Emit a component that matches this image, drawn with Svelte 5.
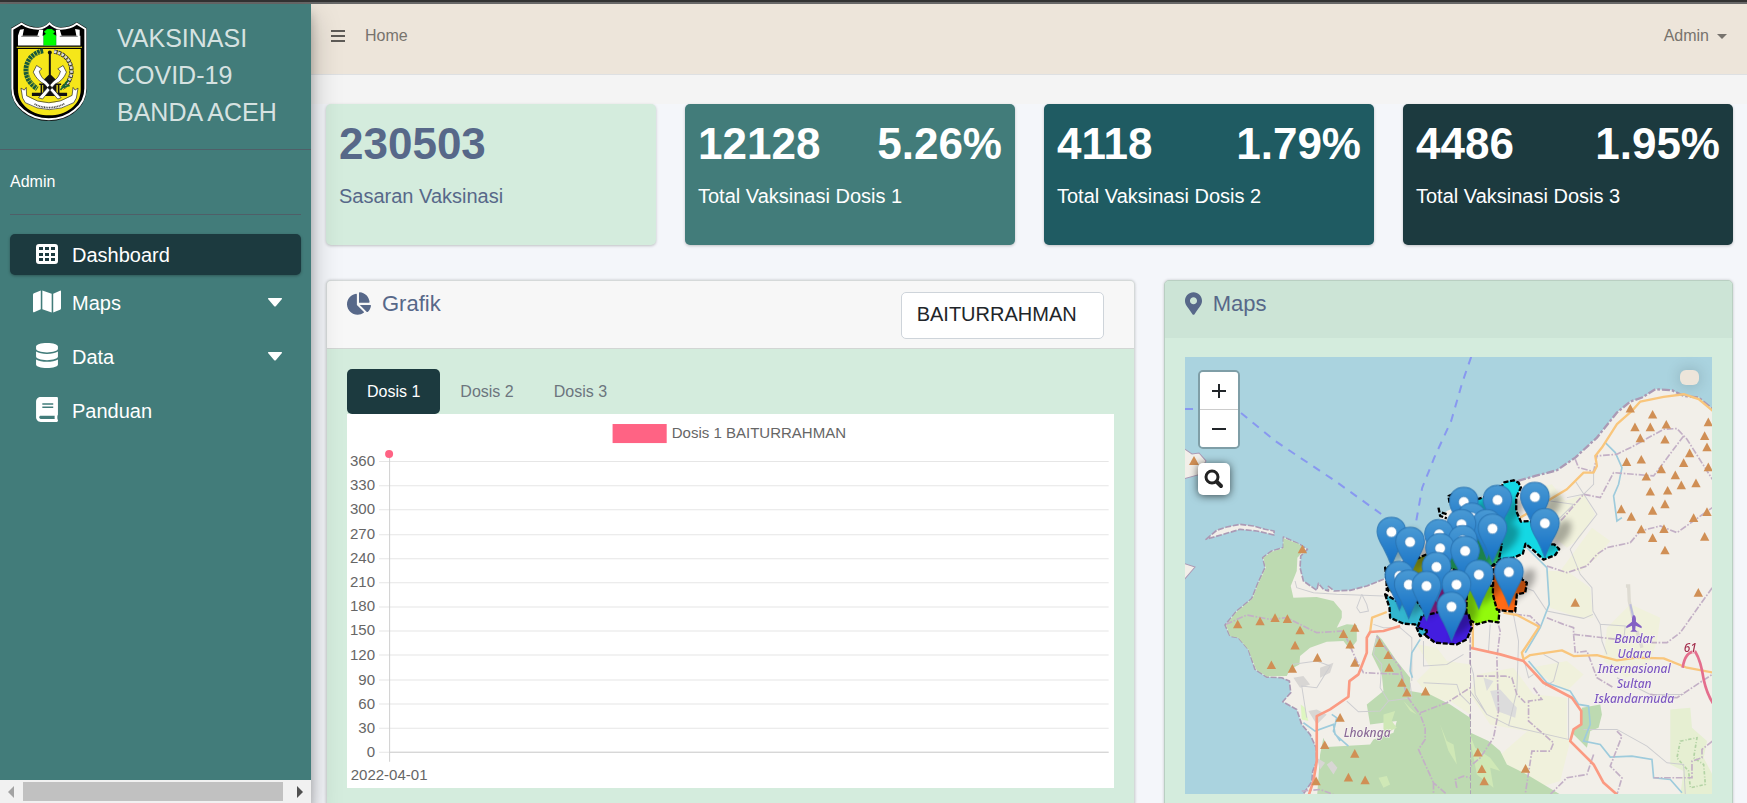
<script>
  const menu = [
    { label: 'Dashboard', icon: 'table', active: true },
    { label: 'Maps', icon: 'map', more: true },
    { label: 'Data', icon: 'database', more: true },
    { label: 'Panduan', icon: 'book' }
  ];

  const stats = [
    { value: '230503', label: 'Sasaran Vaksinasi', tone: 'mint' },
    { value: '12128', percent: '5.26%', label: 'Total Vaksinasi Dosis 1', tone: 'teal' },
    { value: '4118', percent: '1.79%', label: 'Total Vaksinasi Dosis 2', tone: 'deep' },
    { value: '4486', percent: '1.95%', label: 'Total Vaksinasi Dosis 3', tone: 'night' }
  ];

  const tabs = ['Dosis 1', 'Dosis 2', 'Dosis 3'];
  let activeTab = $state('Dosis 1');

  const ticks = [360, 330, 300, 270, 240, 210, 180, 150, 120, 90, 60, 30, 0];
  const tickY = (v) => Math.round(337 - (v / 360) * 290);

  // Summits, one list for each map sheet
  const westPeaks = [
    [397, 145], [203, 370], [270, 361], [315, 351], [352, 354], [390, 388], [375, 433], [304, 492],
    [367, 503], [442, 470], [520, 399], [554, 380], [540, 430], [554, 485], [628, 426], [654, 462],
    [657, 500], [695, 545], [710, 574], [766, 571], [510, 650], [464, 732], [554, 758], [535, 829],
    [585, 837], [438, 840]
  ];
  const eastPeaks = [
    [540, 203], [607, 221], [554, 259], [600, 259], [648, 251], [570, 292], [644, 296], [774, 244],
    [763, 285], [770, 319], [718, 337], [700, 366], [774, 379], [529, 363], [573, 356], [633, 385],
    [588, 407], [675, 403], [693, 433], [737, 427], [600, 452], [652, 449], [644, 490], [513, 505],
    [607, 509], [543, 527], [770, 513], [730, 531], [573, 565], [641, 564], [607, 591], [763, 587],
    [644, 628], [744, 755], [375, 785], [9, 1168], [39, 1208], [50, 1249], [83, 1234], [95, 1284],
    [102, 1320], [226, 1283]
  ];
  const pins = [
    [524, 108], [412, 117], [311, 123], [335, 170], [380, 190], [554, 187], [304, 190], [397, 203],
    [94, 213], [237, 220], [308, 238], [150, 243], [240, 262], [315, 270], [229, 318], [446, 333],
    [356, 341], [118, 345], [289, 371], [146, 371], [199, 375], [274, 437]
  ];
  const airport = ['Bandar', 'Udara', 'Internasional', 'Sultan', 'Iskandarmuda'];
</script>

{#snippet peak(x, y)}
  <path class="peak" d="M{x} {y - 14}L{x + 14} {y + 12}H{x - 14}Z" />
{/snippet}

<div class="app">
  <div class="frame-top"></div>
  <div class="shell">
    <aside class="sidebar">
      <a class="brand" href="#home">
        <svg class="logo" viewBox="30 60 235 305" aria-hidden="true">
          <path d="M33 83L65 65Q85 79 115 81Q135 79 149 64Q163 79 183 81Q213 79 231 65L261 83V265C261 320 210 363 147 363C85 363 33 320 33 265Z" fill="#111" />
          <path d="M37 86L65 70Q85 84 115 85Q135 84 149 69Q163 84 183 85Q213 84 231 70L257 86V265C257 317 207 358 147 358C88 358 37 317 37 265Z" fill="#000" stroke="#fff" stroke-width="6" />
          <path d="M54 106H242V136H54ZM60 88L72 86L68 106H54ZM118 88H130L128 108H112ZM168 88H180L186 108H170ZM226 86L240 88V106H230Z" fill="#fff" />
          <path d="M64 108H118M180 108H234" stroke="#333" stroke-width="2" />
          <path d="M131 136V106L138 100L132 94L142 86H156L166 94L160 100L169 106V136Z" fill="#0f0" stroke="#063" stroke-width="1" />
          <path d="M54 146H243V268C243 317 197 346 148 346C99 346 54 317 54 268Z" fill="#f5e61a" />
          <path d="M50 141H247" stroke="#f5e61a" stroke-width="3" />
          <path d="M130 152C72 162 58 232 112 266" fill="none" stroke="#175a3c" stroke-width="15" stroke-dasharray="8 2" />
          <path d="M122 158C80 178 72 225 106 258" fill="none" stroke="#9a3" stroke-width="2" />
          <path d="M163 154C222 165 232 230 188 264" fill="none" stroke="#333" stroke-width="13" stroke-dasharray="10 2" />
          <path d="M163 154C222 165 232 230 188 264" fill="none" stroke="#ddd" stroke-width="8" stroke-dasharray="7 5" />
          <path d="M182 270L206 240M186 262L210 256" stroke="#163" stroke-width="5" />
          <path d="M147 156H153V224L170 240V272H130V240L147 224ZM96 278H202V288H96ZM122 250H127V284H122ZM174 250H179V284H174ZM118 250H184V255H118ZM130 268H170V288H130Z" fill="#111" />
          <circle cx="150" cy="157" r="6" fill="#111" />
          <path d="M116 293L160 244Q178 232 182 213L174 206L190 196L200 216Q190 242 166 252L128 297ZM184 293L140 244Q122 232 118 213L126 206L110 196L100 216Q112 242 134 252L174 297Z" fill="#fff" stroke="#222" stroke-width="2" />
          <path d="M63 264L73 270L79 262L80 287Q146 330 217 286L220 262L226 270L235 264L230 294L222 308Q148 350 76 308L68 294Z" fill="#fff" stroke="#222" stroke-width="2" />
          <path d="M104 312Q148 334 194 311" fill="none" stroke="#444" stroke-width="5" stroke-dasharray="3 2" />
        </svg>
        <span class="brand-name">VAKSINASI<br />COVID-19<br />BANDA ACEH</span>
      </a>
      <div class="user"><a href="#profile">Admin</a></div>
      <nav class="menu">
        {#each menu as item}
          <a class="menu-item" class:active={item.active} href="#{item.label}">
            <span class="menu-icon">
              {#if item.icon === 'table'}
                <svg width="22" height="20" viewBox="0 0 22 20"><path fill-rule="evenodd" d="M3 0H19Q22 0 22 3V17Q22 20 19 20H3Q0 20 0 17V3Q0 0 3 0ZM3 3V6H7V3ZM9 3V6H13V3ZM15 3V6H19V3ZM3 9V12H7V9ZM9 9V12H13V9ZM15 9V12H19V9ZM3 14V17H7V14ZM9 14V17H13V14ZM15 14V17H19V14Z" /></svg>
              {:else if item.icon === 'map'}
                <svg width="28" height="25" viewBox="0 0 576 512"><path d="M0 117.66v346.32c0 11.32 11.43 19.06 21.94 14.86L160 416V32L20.12 87.95A32.006 32.006 0 0 0 0 117.66zM192 416l192 64V96L192 32v384zM554.06 33.16L416 96v384l139.88-55.95A31.996 31.996 0 0 0 576 394.34V48.02c0-11.32-11.43-19.06-21.94-14.86z" /></svg>
              {:else if item.icon === 'database'}
                <svg width="22" height="25" viewBox="0 0 448 512"><path d="M448 73.143v45.714C448 159.143 347.667 192 224 192S0 159.143 0 118.857V73.143C0 32.857 100.333 0 224 0s224 32.857 224 73.143zM448 176v102.857C448 319.143 347.667 352 224 352S0 319.143 0 278.857V176c48.125 33.143 136.208 48.572 224 48.572S399.874 209.143 448 176zm0 160v102.857C448 479.143 347.667 512 224 512S0 479.143 0 438.857V336c48.125 33.143 136.208 48.572 224 48.572S399.874 369.143 448 336z" /></svg>
              {:else}
                <svg width="22" height="25" viewBox="0 0 448 512"><path d="M448 360V24c0-13.3-10.7-24-24-24H96C43 0 0 43 0 96v320c0 53 43 96 96 96h328c13.3 0 24-10.7 24-24v-16c0-7.5-3.5-14.3-8.9-18.7-4.2-15.4-4.2-59.3 0-74.7 5.4-4.3 8.9-11.1 8.9-18.6zM128 134c0-3.3 2.7-6 6-6h212c3.3 0 6 2.7 6 6v20c0 3.3-2.7 6-6 6H134c-3.3 0-6-2.7-6-6v-20zm0 64c0-3.3 2.7-6 6-6h212c3.3 0 6 2.7 6 6v20c0 3.3-2.7 6-6 6H134c-3.3 0-6-2.7-6-6v-20zm253.4 250H96c-17.7 0-32-14.3-32-32 0-17.6 14.4-32 32-32h285.4c-1.9 17.1-1.9 46.9 0 64z" /></svg>
              {/if}
            </span>
            <span class="menu-label">{item.label}</span>
            {#if item.more}
              <svg class="chevron" width="14" height="9" viewBox="0 0 14 9"><path d="M1 0H13Q15 0 13.500 1.500L8 8Q7 9 6 8L.5 1.500Q-1 0 1 0Z" /></svg>
            {/if}
          </a>
        {/each}
      </nav>
      <div class="scrollbar" aria-hidden="true">
        <svg width="6" height="12" viewBox="0 0 6 12"><path d="M6 0V12L0 6Z" fill="#a3a3a3" /></svg>
        <div class="thumb"></div>
        <svg width="6" height="12" viewBox="0 0 6 12"><path d="M0 0V12L6 6Z" fill="#505050" /></svg>
      </div>
    </aside>

    <main class="main">
      <header class="topbar">
        <button class="plain" aria-label="Menu">
          <svg width="14" height="14" viewBox="0 0 14 14"><path d="M0 1H14V3H0ZM0 6H14V8H0ZM0 11H14V13H0Z" /></svg>
        </button>
        <a href="#home">Home</a>
        <button class="plain account">Admin <span class="caret"></span></button>
      </header>
      <div class="band"></div>

      <section class="stats">
        {#each stats as s}
          <div class="stat {s.tone}">
            <div class="figures"><strong>{s.value}</strong>{#if s.percent}<strong>{s.percent}</strong>{/if}</div>
            <p>{s.label}</p>
          </div>
        {/each}
      </section>

      <section class="panels">
        <div class="col">
          <article class="card">
            <header class="card-head light">
              <svg width="24" height="23" viewBox="0 0 544 512"><path d="M527.79 288H290.5l158.03 158.03c6.04 6.04 15.98 6.53 22.19.68 38.7-36.46 65.32-85.61 73.13-140.86 1.34-9.46-6.51-17.85-16.06-17.85zm-15.83-64.8C503.72 103.74 408.26 8.28 288.8.04 279.68-.59 272 7.1 272 16.24V240h223.77c9.14 0 16.82-7.68 16.19-16.8zM224 288V50.71c0-9.55-8.39-17.4-17.84-16.06C86.99 51.49-4.1 155.6.14 280.37 4.5 408.51 114.83 513.59 243.03 511.98c50.4-.63 96.97-16.87 135.26-44.03 7.9-5.6 8.42-17.23 1.57-24.08L224 288z" /></svg>
              <h3>Grafik</h3>
              <select aria-label="Kecamatan"><option>BAITURRAHMAN</option></select>
            </header>
            <div class="card-body">
              <div class="tabs" role="tablist">
                {#each tabs as t}
                  <button role="tab" class="tab" class:active={t === activeTab} aria-selected={t === activeTab} onclick={() => (activeTab = t)}>{t}</button>
                {/each}
              </div>
              <svg class="chart" viewBox="0 0 765 373" role="img" aria-label="Dosis 1 BAITURRAHMAN">
                <rect x="265" y="10" width="54" height="19" fill="#ff6384" />
                <text x="324" y="24">Dosis 1 BAITURRAHMAN</text>
                {#each ticks as v}
                  <path class="grid" d="M32 {tickY(v)}.5H760" />
                  <text x="28" y={tickY(v) + 5} text-anchor="end">{v}</text>
                {/each}
                <path class="axis" d="M42.5 40V347M42 337.500H760" />
                <circle cx="42" cy="40" r="4" fill="#ff6384" />
                <text x="42" y="365" text-anchor="middle">2022-04-01</text>
              </svg>
            </div>
          </article>
        </div>

        <div class="col">
          <article class="card green">
            <header class="card-head">
              <svg width="17" height="23" viewBox="0 0 384 512"><path d="M172.268 501.67C26.97 291.031 0 269.413 0 192 0 85.961 85.961 0 192 0s192 85.961 192 192c0 77.413-26.97 99.031-172.268 309.67-9.535 13.774-29.93 13.773-39.464 0zM192 272c44.183 0 80-35.817 80-80s-35.817-80-80-80-80 35.817-80 80 35.817 80 80 80z" /></svg>
              <h3>Maps</h3>
            </header>
            <div class="card-body">
              <div class="map">
                <svg class="tiles" viewBox="0 0 527 437" preserveAspectRatio="xMidYMid slice" role="img" aria-label="Peta Banda Aceh">
                  <defs>
                    <linearGradient id="pinFill" x1="0" y1="0" x2="0" y2="1">
                      <stop offset="0" stop-color="#4a9ad4" />
                      <stop offset="1" stop-color="#126fc6" />
                    </linearGradient>
                    <filter id="soft" x="-50%" y="-50%" width="200%" height="200%"><feGaussianBlur stdDeviation="10" /></filter>
                  </defs>
                  <rect width="527" height="437" fill="#aad3df" />
                  <path d="M-2 91L7 97L14 96L21 104L13 118L-2 122Z" class="land islet" />
                  <path d="M-2 206L10 210L-2 224Z" class="land islet" />

                  <!-- East sheet: coast, fields and forest -->
                  <g transform="translate(265 -16) scale(.33333)">
                    <path class="land" d="M-190 710L-140 650L-10 510L90 470L160 425L200 421L255 405L320 388L375 350L440 290L500 215L540 182L575 170L615 145L665 148L700 165L745 170L800 215V1380H-200Z" />
                    <path class="field" d="M265 440L305 430L345 480L400 460L435 520L390 590L350 620L280 560ZM290 690L350 690L420 740L428 830L380 828L300 800ZM425 560L480 600L440 650L390 690L330 690ZM470 860L540 790L630 830L620 900L600 960L530 1010L460 960ZM240 980L350 960L400 1000L350 1050L300 1020ZM80 1000L190 980L250 1060L350 1070L350 1200L230 1170L120 1150L60 1060ZM300 1110L360 1200L330 1320L230 1350L140 1250ZM-100 960L-10 950L70 1010L30 1040L-80 1010Z" />
                    <path d="M660 1105L720 1100L725 1160L770 1200L760 1250L786 1300V1360H690L700 1290L660 1270Z" fill="#e6efd2" />
                    <path d="M690 1200L740 1190L730 1250L760 1270L765 1330L720 1340L715 1290L680 1250Z" fill="none" stroke="#b3d3a4" stroke-width="5" stroke-dasharray="10 6 3 5" />
                    <path class="forest" d="M-200 1000L-80 1070L0 1110L45 1140L50 1170L115 1200L150 1230L170 1270L230 1300L330 1360H-200ZM395 1100L450 1090L455 1120L445 1160L420 1170L410 1220L365 1175L390 1150Z" />
                    <path d="M120 1050L150 1045L200 1100L195 1130L140 1110ZM100 1010L130 1020L110 1050Z" fill="#dcdcdc" />
                    <path d="M55 1170L75 1220L120 1250L150 1290L120 1280L130 1340L80 1300Z" fill="#cfe8b6" />
                    <path class="street" d="M375 420L440 520L385 590L360 625L390 700L425 740L428 810L450 850L525 855L520 900M200 730L250 750L290 810L400 832L428 820M190 822L205 900L200 1050L175 1155M120 850L115 930M450 850L455 900L470 940M50 930L70 1000L75 1060L110 1120L180 1155L355 1195L355 1070M220 950L235 1010L250 1000M280 940L325 965L310 1020L285 1035M400 1165H500L590 1215L650 1265L700 1270L705 1360M500 1010L600 1060L700 1060M430 390L430 430L400 460L350 470M0 970L60 930M300 480L370 490L320 540M-180 1000L-80 970L0 1040L60 1050L110 1120" />
                    <path class="river" d="M465 305L495 335L515 380L505 430L490 465L500 540L515 530M220 610L290 680L297 790L270 860L225 935M235 960L290 1025L360 1050L385 1090L415 1095L420 1150L400 1200L450 1210L480 1248L545 1245L605 1255L610 1310L660 1315L695 1355" />
                    <path class="bound" d="M375 355L385 380L430 392L440 345L500 340L545 318L640 265L680 263L710 295L786 415M700 285L610 405L490 395L450 470L400 460L340 530L330 540M290 675L350 695L410 675L440 640L470 620L540 605L570 570L630 555L680 575L786 500M195 820L240 825L270 855M290 830L340 850L370 860L370 880L500 895M370 880L375 935L410 930L440 1010L490 1040M135 820L150 870L140 950L145 1110L130 1190L90 1250L20 1310L15 1360M80 1005L165 1005L185 1010L200 1060L225 1085M250 1040L275 1075L235 1080L235 1140L310 1205L300 1230L245 1230L225 1360M430 1240L410 1300L350 1310L300 1360M500 1170L515 1185L480 1275L515 1310L500 1360M600 905L650 905L690 875L750 790L786 740M600 1060L680 1070L786 1000M786 1200L755 1225L755 1250L725 1260L725 1310L610 1310" />
                    <path class="coastline" d="M160 425L200 421L255 405L320 388L375 350L440 290L500 215L540 182L575 170L615 145L665 148L700 165L745 170L800 215" />
                    <path class="trunk" d="M210 530L270 495L300 475L350 445L400 395L430 395L440 375L435 345L455 320L500 250L545 210L570 182L640 168L700 160L745 175L790 212M68 840V920M160 815L200 822L267 857L215 935L220 955L240 942L335 928L370 945L440 942L500 958L560 950L640 952L710 980L790 995" />
                    <path class="primary" d="M-60 900L0 912L60 920L150 940L220 960L280 1025L365 1070L393 1110V1150L370 1165L360 1200L430 1270L460 1325L500 1360" />
                    <path d="M697 980Q705 930 735 932Q752 960 760 1015Q770 1060 790 1090" fill="none" stroke="#e46e8d" stroke-width="8" />
                    <path d="M527 735H535L537 780L548 830M560 870L575 920" stroke="#dedbd2" stroke-width="10" fill="none" />
                    <path d="M540 790L552 840" stroke="#bbbbdc" stroke-width="6" />
                    <path d="M551 822Q558 824 557 842L574 856V862L556 854L555 866L562 872H540L546 866L545 854L528 862V856L545 842Q544 824 551 822Z" fill="#8461c4" />
                    {#each eastPeaks as p}{@render peak(p[0], p[1])}{/each}
                  </g>

                  <!-- West sheet -->
                  <g transform="translate(-15 144) scale(.33333)">
                    <path class="land coast" d="M108 115L140 88L170 78L210 70L250 75L285 85L312 90L312 102L260 90L210 85L170 97Z" />
                    <path class="land coast" d="M840 900H385L425 842L428 810L440 780L438 740L420 700L395 670L380 625L338 602L362 575L358 540L335 530L290 528L255 505L235 445L205 410L180 405L165 372L200 330L245 293L262 250L285 200L278 170L305 150L340 140V108L385 128L412 145L392 165L390 200L400 240L440 268L445 247L460 265L475 270V256L492 270L540 268L590 255L640 235L700 180L900 200V900Z" />
                    <path class="field" d="M740 430L800 440L830 480L900 490V640L840 600L780 590L740 540L780 500Z" />
                    <path class="forest" d="M340 112L385 128L405 145L382 170L380 210L362 255L370 290L440 288L490 300L515 330L515 350L500 380L530 370L560 372L560 420L540 445L520 420L470 422L420 440L390 465L388 490L360 505L350 525L290 526L258 505L235 445L205 410L180 405L168 372L200 332L247 293L264 250L287 200L280 170L305 152L340 142ZM620 400L635 415L680 480L720 530V570L780 580L840 610L900 650V900H440L450 760L460 710L470 738L600 730L610 715L670 695L680 660L600 670L590 610L640 570L635 520L605 460Z" />
                    <path d="M640 640L675 630L665 660L680 680L640 700ZM810 670L830 720L850 730L860 790L835 750ZM625 830L650 825L660 850L640 860ZM700 600L740 640L720 630Z" fill="#cfe8b6" />
                    <path d="M370 530L400 525L420 550L390 560ZM450 500L490 485L480 515L450 530ZM415 630L440 625L470 640L440 670ZM470 790L485 780L502 800L490 820ZM440 770L465 785L450 805Z" fill="#d8d6d4" />
                    <path d="M392 610L405 620L415 660L395 655Z" fill="#def6c0" />
                    <path class="street" d="M375 240L380 260L430 275L500 280L640 285M575 280L560 320L570 335L595 330L590 310L575 280M365 490L440 480L480 495L440 560L395 555L410 650M610 370L640 380L690 380L725 410V540M760 420V495L830 490L880 460M760 545L860 550L870 580L900 610M620 405L610 460L635 490L630 560L655 600L630 630L565 632L530 600M655 600L725 590L720 545" />
                    <path class="river" d="M750 415L725 455L720 510L727 530M400 665L435 690L490 670L495 700L535 735M485 640L500 650L490 690L510 720" />
                    <path class="bound" d="M168 370L230 342L300 355L350 350L440 395L520 390L560 480L580 515L700 520M620 405L690 500L710 585L750 640L765 680V715L745 745L790 845L830 880M750 635L830 605L900 560M790 845V880M860 860L855 835L880 825L900 830M395 870L450 865L490 880" />
                    <path class="trunk" d="M600 393L606 350L650 333" />
                    <path class="primary" d="M415 885L430 840L440 780V645L480 625L535 587L538 540L565 520L590 455V410L600 393L640 390L690 375" />
                    {#each westPeaks as p}{@render peak(p[0], p[1])}{/each}
                  </g>
                  <path class="peak" d="M9 99L14 108H4Z" />

                  <path class="ferry" d="M0 52H14M56 56L90 84L150 124L196 157M286 0L277 26L266 64L249 101L237 131L230 170" />

                  <!-- City districts and markers -->
                  <g transform="translate(175 104) scale(.33333)">
                    <g class="district">
                      <path fill="#14d8e4" d="M350 115L375 108L400 80L425 75L432 64L460 58L475 65L482 80L468 110V150L482 182L512 180L530 215L560 250L582 250L597 264L585 282L550 296L520 268L496 248L488 278L460 290L420 295L350 300L330 150Z" />
                      <path fill="#28b96a" d="M300 200L425 250L415 302L395 315L330 340L260 320Z" />
                      <path fill="#8c9b14" d="M130 310L200 280L260 330L200 400L85 390L75 320Z" />
                      <path fill="#9b2196" d="M180 400L240 370L330 380L330 460L190 470Z" />
                      <path fill="#92fa0c" d="M330 370L400 375L405 420L418 440L415 484L385 480L350 490L318 470L320 390Z" />
                      <path fill="#ff6a14" d="M400 310L480 330L485 355L500 365L495 395L470 400L465 452L440 450L410 446L398 400Z" />
                      <path fill="#32b6cf" d="M75 400L88 440L90 470L130 488L165 490L180 525L208 515L215 480L170 420L110 420Z" />
                      <path fill="#431ddf" d="M185 465L172 500L200 508L198 525L225 545L290 550L320 535L335 500L325 458L250 450Z" />
                      <path fill="none" d="M235 140L240 165L260 172M245 155L262 160M268 125L265 105L300 90M78 320L80 390" />
                    </g>
                    <g filter="url(#soft)" opacity=".3">
                      {#each pins as p}
                        <path transform="translate({p[0]} {p[1]})" d="M0 100L20 30Q45 -15 75 -8Q90 25 50 62Z" fill="#000" />
                      {/each}
                    </g>
                    {#each pins as p}
                      <g transform="translate({p[0]} {p[1]})">
                        <path d="M0 -44C26 -44 43 -25 43 -1C43 18 31 35 22 52Q10 75 0 102Q-10 75 -22 52C-31 35 -43 18 -43 -1C-43 -25 -26 -44 0 -44Z" fill="url(#pinFill)" stroke="#2a75b4" stroke-width="3" />
                        <circle r="16" fill="#fff" stroke="#3479b3" stroke-width="2" />
                      </g>
                    {/each}
                  </g>

                  <text class="place" x="182" y="380">Lhoknga</text>
                  {#each airport as word, i}
                    <text class="place air" x="449" y={286 + i * 15}>{word}</text>
                  {/each}
                  <text class="place ref" x="505" y="295">61</text>
                </svg>
                <div class="zoom">
                  <button aria-label="Perbesar"><svg width="14" height="14" viewBox="0 0 14 14"><path d="M6 0H8V6H14V8H8V14H6V8H0V6H6Z" /></svg></button>
                  <button aria-label="Perkecil"><svg width="14" height="14" viewBox="0 0 14 14"><path d="M0 6H14V8H0Z" /></svg></button>
                </div>
                <button class="search" aria-label="Cari">
                  <svg width="22" height="22" viewBox="0 0 22 22"><circle cx="9" cy="9" r="6" fill="none" stroke="#222" stroke-width="3" /><path d="M14 14L18 18" stroke="#222" stroke-width="4" stroke-linecap="round" /></svg>
                </button>
                <div class="info"></div>
              </div>
            </div>
          </article>
        </div>
      </section>
    </main>
  </div>
</div>

<style>
  :global(body) {
    margin: 0;
    background: #f4f6fa;
  }
  * {
    box-sizing: border-box;
  }
  .app {
    height: 100vh;
    display: flex;
    flex-direction: column;
    overflow: hidden;
    font: 16px/24px 'Liberation Sans', Arial, sans-serif;
    color: #212529;
  }
  a {
    color: inherit;
    text-decoration: none;
  }
  button {
    font: inherit;
    color: inherit;
    padding: 0;
    border: 0;
    background: none;
    cursor: pointer;
  }
  svg {
    display: block;
    flex: none;
    fill: currentColor;
  }
  .frame-top {
    flex: none;
    height: 4px;
    background: #333;
    border-bottom: 2px solid #686868;
  }
  .shell {
    flex: 1;
    min-height: 0;
    display: flex;
  }

  .sidebar {
    flex: 0 0 311px;
    display: flex;
    flex-direction: column;
    z-index: 2;
    background: #427c7a;
    color: #fff;
    box-shadow: 0 14px 28px rgba(0, 0, 0, 0.25), 0 10px 10px rgba(0, 0, 0, 0.22);
  }
  .brand {
    display: flex;
    gap: 29px;
    padding: 16px 10px 18px;
    border-bottom: 1px solid #4f5f68;
    font-size: 25px;
    line-height: 37px;
    color: rgba(255, 255, 255, 0.8);
  }
  .logo {
    width: 78px;
    height: 102px;
  }
  .user {
    margin: 0 10px;
    padding: 20px 0;
    border-bottom: 1px solid #4f5f68;
  }
  .menu {
    flex: 1;
    padding: 19px 10px;
    display: flex;
    flex-direction: column;
    gap: 13px;
  }
  .menu-item {
    display: flex;
    align-items: center;
    gap: 7px;
    height: 41px;
    padding: 0 19px;
    font-size: 20px;
    border-radius: 5px;
  }
  .menu-item.active {
    margin-bottom: -6px;
    background: #1c3a3f;
    box-shadow: 0 1px 3px rgba(0, 0, 0, 0.3);
  }
  .menu-icon {
    width: 36px;
    padding-bottom: 2px;
    display: flex;
    justify-content: center;
  }
  .chevron {
    margin-left: auto;
  }
  .scrollbar {
    height: 23px;
    display: flex;
    align-items: center;
    justify-content: space-between;
    padding: 0 8px;
    gap: 9px;
    background: #f1f1f1;
  }
  .thumb {
    flex: 1;
    height: 19px;
    margin-right: 5px;
    background: #c1c1c1;
  }

  .main {
    flex: 1;
    min-width: 0;
    overflow: hidden;
  }
  .topbar {
    height: 71px;
    display: flex;
    align-items: flex-start;
    gap: 20px;
    padding: 20px 20px 0;
    background: #ede5da;
    border-bottom: 1px solid #dee0e2;
    color: #77736d;
  }
  .plain {
    height: 24px;
    display: flex;
    align-items: center;
  }
  .plain svg {
    fill: #5e5b57;
  }
  .account {
    margin-left: auto;
    gap: 8px;
  }
  .caret {
    border: 5px solid transparent;
    border-top-color: currentColor;
    border-bottom: 0;
  }
  .band {
    height: 29px;
    background: #f4f4f4;
  }
  .stats {
    display: grid;
    grid-template-columns: repeat(4, 1fr);
    gap: 29px;
    padding: 0 14px 0 15px;
  }
  .stat {
    height: 141px;
    padding: 14px 13px;
    border-radius: 5px;
    color: #fff;
    box-shadow: 0 1px 3px rgba(0, 0, 0, 0.22);
  }
  .stat.mint {
    background: #d4ecdd;
    color: #576889;
  }
  .stat.teal {
    background: #427c7a;
  }
  .stat.deep {
    background: #1f5b62;
  }
  .stat.night {
    background: #1c3a3f;
  }
  .figures {
    display: flex;
    justify-content: space-between;
    font-size: 44px;
    line-height: 52px;
  }
  .stat p {
    margin: 11px 0 0;
    font-size: 20px;
    line-height: 30px;
  }
  .panels {
    display: grid;
    grid-template-columns: 7fr 5fr;
    margin-top: 35px;
  }
  .col {
    min-width: 0;
    padding: 0 14px 0 15px;
  }
  .card {
    border: 1px solid #d5d9d9;
    border-radius: 5px;
    overflow: hidden;
    background: #d4ecdd;
    box-shadow: 0 0 3px rgba(0, 0, 0, 0.2);
  }
  .card.green {
    border-color: #b9cfc2;
  }
  .card-head {
    display: flex;
    align-items: flex-start;
    gap: 11px;
    height: 57px;
    padding: 11px 20px 0;
    color: #576889;
    background: #cce4d6;
  }
  .card-head.light {
    height: 68px;
    padding-right: 30px;
    background: #f7f7f7;
    border-bottom: 1px solid #d2d6d4;
  }
  .card-head h3 {
    margin: 0;
    font-size: 22px;
    line-height: 24px;
    font-weight: 400;
  }
  select {
    margin-left: auto;
    width: 203px;
    height: 47px;
    padding: 0 15px 4px;
    appearance: none;
    font: inherit;
    font-size: 20px;
    color: #212529;
    background: #fff;
    border: 1px solid #ced4da;
    border-radius: 5px;
  }
  .card-body {
    padding: 20px;
  }
  .card.green .card-body {
    padding-top: 19px;
  }
  .tabs {
    display: flex;
  }
  .tab {
    height: 45px;
    padding: 0 20px;
    border-radius: 5px;
    color: #6c757d;
  }
  .tab.active {
    color: #fff;
    background: #1c3a3f;
  }
  .chart {
    width: 100%;
    height: auto;
    background: #fff;
  }
  .chart text {
    font-size: 15px;
    fill: #666;
  }
  .grid {
    stroke: #e6e6e6;
  }
  .axis {
    stroke: #d0d0d0;
  }

  .map {
    position: relative;
    height: 437px;
  }
  .tiles {
    width: 100%;
    height: 100%;
  }
  .land {
    fill: #f2efe9;
  }
  .forest {
    fill: #bddab1;
  }
  .field {
    fill: #f0f1dc;
  }
  .islet {
    stroke: #ab9ab5;
  }
  .coast {
    stroke: #ab9ab5;
    stroke-width: 5;
    stroke-dasharray: 18 5;
  }
  .coastline {
    fill: none;
    stroke: #ab9ab5;
    stroke-width: 7;
    stroke-dasharray: 24 6 8 6;
  }
  .bound {
    fill: none;
    stroke: #c3b0c6;
    stroke-width: 5;
    stroke-dasharray: 20 5 5 5;
  }
  .street {
    fill: none;
    stroke: #cdcdd0;
    stroke-width: 3;
  }
  .river {
    fill: none;
    stroke: #9ecbdc;
    stroke-width: 5;
  }
  .trunk {
    fill: none;
    stroke: #f9c67c;
    stroke-width: 7;
    stroke-linejoin: round;
  }
  .primary {
    fill: none;
    stroke: #fb9a82;
    stroke-width: 8;
    stroke-linejoin: round;
  }
  .peak {
    fill: #d08f55;
  }
  .coast,
  .district path {
    stroke-linejoin: round;
  }
  .district path {
    stroke: #000;
    stroke-width: 7;
    stroke-dasharray: 15 5;
  }
  .ferry {
    fill: none;
    stroke: #8898f0;
    stroke-width: 2;
    stroke-dasharray: 8 7;
  }
  .place {
    font: italic 500 12px 'Noto Sans', sans-serif;
    text-anchor: middle;
    fill: #8a6a96;
    stroke: #f8f5f3;
    stroke-width: 1px;
    paint-order: stroke;
  }
  .place.air {
    fill: #7d58c0;
  }
  .place.ref {
    fill: #a3304c;
  }
  .zoom {
    position: absolute;
    top: 13px;
    left: 13px;
    border: 2px solid rgba(0, 0, 0, 0.25);
    border-radius: 5px;
    background-clip: padding-box;
  }
  .zoom button {
    width: 38px;
    height: 37px;
    display: grid;
    place-items: center;
    background: #fff;
    border-radius: 0 0 3px 3px;
  }
  .zoom button:first-child {
    height: 38px;
    border-bottom: 1px solid #ccc;
    border-radius: 3px 3px 0 0;
  }
  .search {
    position: absolute;
    top: 106px;
    left: 13px;
    width: 32px;
    height: 32px;
    display: grid;
    place-items: center;
    background: #fff;
    border-radius: 5px;
    box-shadow: 0 1px 8px rgba(0, 0, 0, 0.65);
  }
  .info {
    position: absolute;
    top: 13px;
    right: 13px;
    width: 19px;
    height: 15px;
    border-radius: 6px;
    background: #ede5da;
    box-shadow: 0 0 15px rgba(0, 0, 0, 0.2);
  }
</style>
